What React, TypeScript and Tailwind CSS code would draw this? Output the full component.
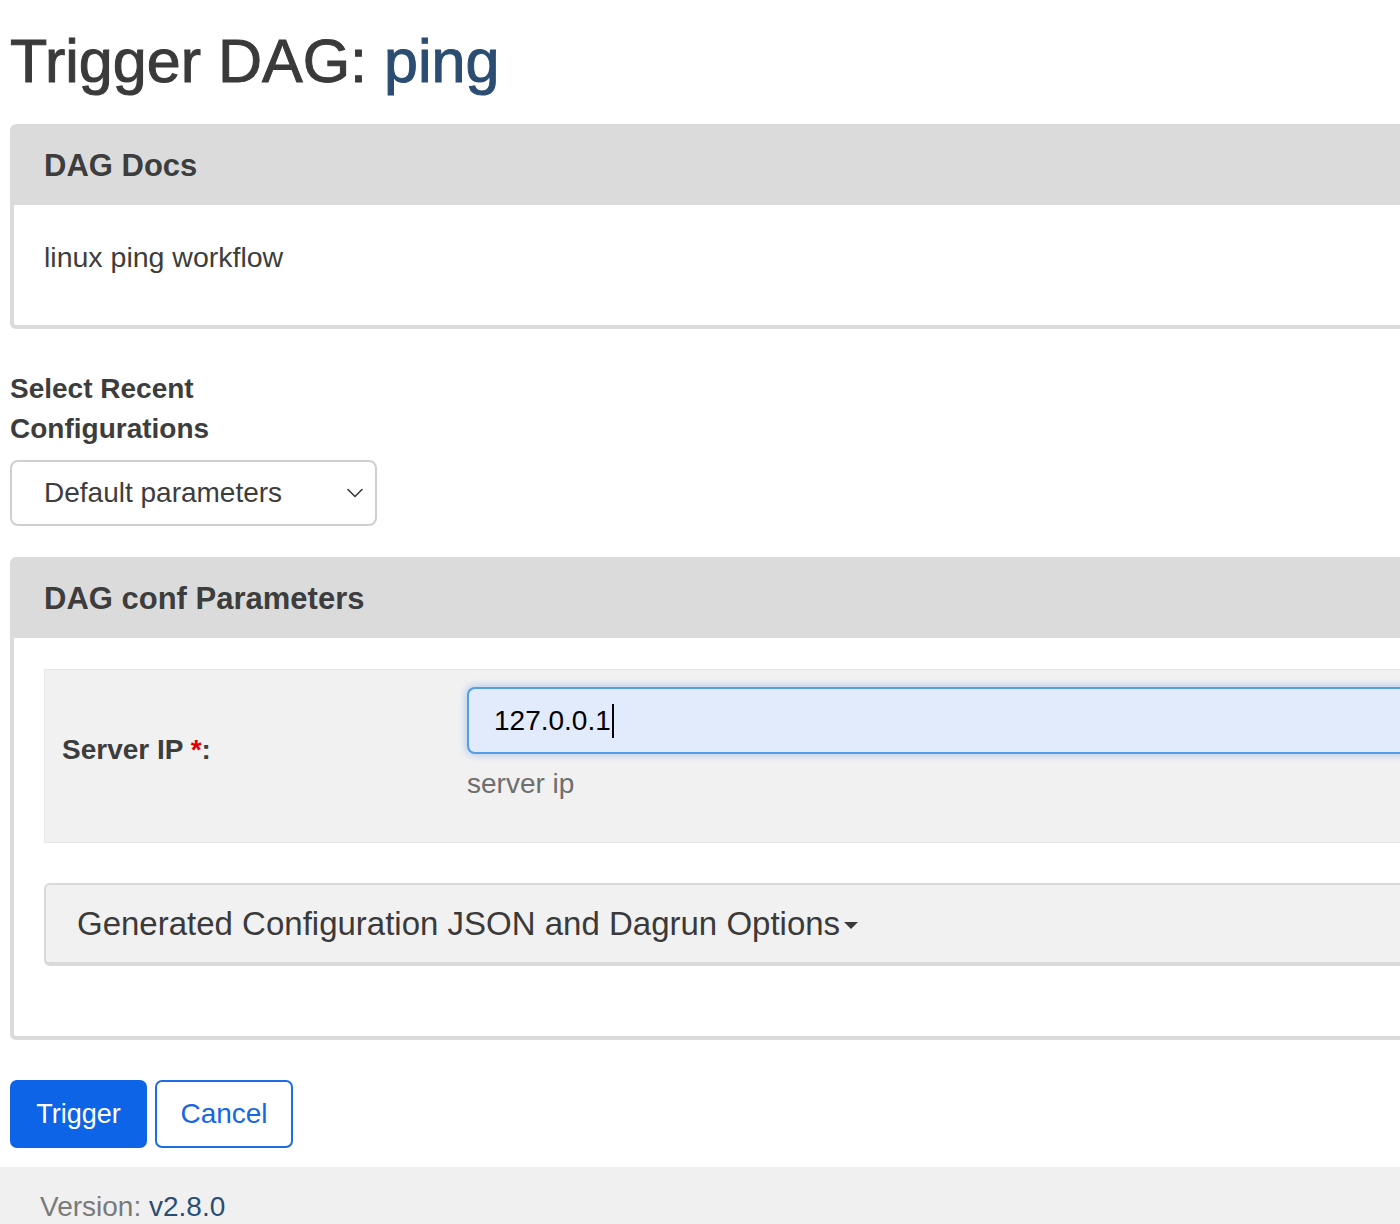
import { ChevronDown } from "lucide-react";

const font = { fontFamily: '"Liberation Sans", Arial, sans-serif' };

function Panel({ title, children, bodyClass }: { title: string; children: React.ReactNode; bodyClass: string }) {
  return (
    <div className="rounded-[6px] border-4 border-r-0 border-[#dbdbdb] bg-white">
      <div className="flex h-[77px] items-center bg-[#dbdbdb] px-[30px] text-[31px] font-bold text-[#3d3d3d]">{title}</div>
      <div className={bodyClass}>{children}</div>
    </div>
  );
}

export default function App() {
  return (
    <div className="h-[1224px] w-full overflow-hidden bg-white text-[#3d3d3d]" style={font}>
      <div className="w-[1800px] pl-[10px]">
        <h1 className="mt-[28px] text-[61px] font-medium leading-[67px] text-[#3a3a3a] [-webkit-text-stroke:1px_currentColor]">
          Trigger DAG: <span className="text-[#2b4d72]">ping</span>
        </h1>

        <div className="mt-[29px]">
          <Panel title="DAG Docs" bodyClass="h-[120px] px-[30px] pt-[32px]">
            <p className="text-[28.5px] leading-[40px]">linux ping workflow</p>
          </Panel>
        </div>

        <div className="mt-[40px] text-[28px] font-bold leading-[40px]">
          Select Recent
          <br />
          Configurations
        </div>
        <div className="mt-[11px] flex h-[66px] w-[367px] items-center justify-between rounded-[8px] border-2 border-[#cfcfcf] pl-[32px] pr-[6px]">
          <span className="text-[28px]">Default parameters</span>
          <ChevronDown size={28} strokeWidth={1.4} className="text-[#3a3a3a]" />
        </div>

        <div className="mt-[31px]">
          <Panel title="DAG conf Parameters" bodyClass="pl-[30px] pt-[31px] pb-[70px]">
            <div className="flex h-[174px] border border-r-0 border-[#e6e6e6] bg-[#f1f1f1]">
              <div className="w-[422px] pl-[17px] pt-[60px]">
                <span className="text-[28px] font-bold leading-[40px]">
                  Server IP <span className="text-[#e00000]">*</span>:
                </span>
              </div>
              <div className="flex-1 pt-[17px]">
                <div className="flex h-[67px] items-center rounded-l-[8px] border-2 border-r-0 border-[#559de7] bg-[#e2ebfb] pl-[25px] shadow-[0_0_7px_2px_rgba(85,150,230,0.35)]">
                  <span className="text-[28px] text-black">127.0.0.1</span>
                  <span className="ml-[1px] h-[34px] w-[2px] bg-black" />
                </div>
                <p className="mt-[10px] text-[28px] leading-[40px] text-[#6e6e6e]">server ip</p>
              </div>
            </div>

            <div className="mt-[40px] flex h-[83px] items-center rounded-l-[6px] border-2 border-b-4 border-r-0 border-[#d9d9d9] bg-[#f1f1f1] pl-[31px]">
              <span className="text-[33px] text-[#3a3a3a]">Generated Configuration JSON and Dagrun Options</span>
              <span className="ml-[4px] mt-[4px] h-0 w-0 border-x-[7px] border-t-[7px] border-x-transparent border-t-[#3a3a3a]" />
            </div>
          </Panel>
        </div>

        <div className="mt-[40px] flex gap-[8px]">
          <button className="h-[68px] w-[137px] rounded-[7px] bg-[#0e64e6] text-[27px] text-white">Trigger</button>
          <button className="h-[68px] w-[138px] rounded-[7px] border-2 border-[#1b6de8] bg-white text-[28px] text-[#1467e5]">
            Cancel
          </button>
        </div>
      </div>

      <footer className="mt-[19px] h-[80px] bg-[#f0f0f0] pl-[40px] pt-[20px] text-[28px] leading-[40px] text-[#7a7a7a]">
        Version: <span className="text-[#2b4d72]">v2.8.0</span>
      </footer>
    </div>
  );
}
